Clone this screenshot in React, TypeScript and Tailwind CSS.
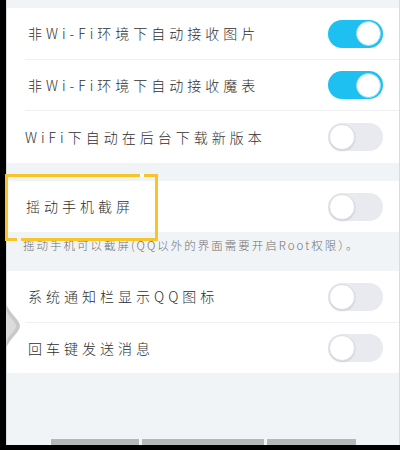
import React from 'react';

const font = { fontFamily: '"Noto Sans CJK SC", "Noto Sans", sans-serif' };

function Toggle({ on }: { on: boolean }) {
  return on ? (
    <div className="flex h-[28px] w-[55px] items-center justify-end rounded-full bg-[#1ec0f1] px-[2px]">
      <div className="h-[25px] w-[25px] rounded-full border border-[#8fdcf6] bg-white" />
    </div>
  ) : (
    <div className="flex h-[28px] w-[55px] items-center justify-start rounded-full bg-[#e8eaf0] px-[1px]">
      <div className="h-[26px] w-[26px] rounded-full border border-[#dcdee3] bg-white shadow-[0_1px_2px_rgba(0,0,0,0.12)]" />
    </div>
  );
}

function Row({
  label,
  on,
  divider,
  indent = 'pl-[21px]',
  height = 'h-[52px]',
}: {
  label: string;
  on: boolean;
  divider?: boolean;
  indent?: string;
  height?: string;
}) {
  return (
    <div className={`flex ${height} flex-col bg-white`}>
      <div className={`flex flex-1 items-center justify-between pr-[16px] ${indent}`}>
        <span className="text-[14px] font-light tracking-[4px] text-[#2e2e2e]">{label}</span>
        <Toggle on={on} />
      </div>
      {divider ? <div className="ml-[18px] h-px bg-[#eef0f3]" /> : null}
    </div>
  );
}

export default function App() {
  return (
    <div className="relative flex h-[450px] w-[400px] flex-col overflow-hidden bg-black" style={font}>
      <div className="flex flex-1">
        <div className="w-[6px] bg-black" />
        <div className="flex flex-1 flex-col border-l border-r border-[#d9dcdf] bg-[#f1f4f7]">
          <div className="h-[8px]" />
          <Row label="非Wi-Fi环境下自动接收图片" on divider height="h-[52px]" />
          <Row label="非Wi-Fi环境下自动接收魔表" on divider height="h-[51px]" />
          <Row label="WiFi下自动在后台下载新版本" on={false} indent="pl-[18px]" height="h-[52px]" />
          <div className="h-[18px]" />
          <Row label="摇动手机截屏" on={false} indent="pl-[19px]" height="h-[51px]" />
          <div className="h-[39px] pl-[16px] pt-[5px] text-[11.5px] font-light tracking-[2px] text-[#6f6f6f]">
            摇动手机可以截屏(QQ以外的界面需要开启Root权限）。
          </div>
          <Row label="系统通知栏显示QQ图标" on={false} divider height="h-[52px]" />
          <Row label="回车键发送消息" on={false} height="h-[50px]" />
          <div className="flex flex-1 items-end">
            <div className="ml-[44px] flex gap-[3px]">
              <div className="h-[6px] w-[88px] bg-[#b3b8b8]" />
              <div className="h-[6px] w-[122px] bg-[#b3b8b8]" />
              <div className="h-[6px] w-[89px] bg-[#b3b8b8]" />
            </div>
          </div>
        </div>
      </div>
      <div className="h-[5px] bg-black" />

      {/* highlight box */}
      <div className="absolute left-[5px] top-[174px] h-[67px] w-[153px] border-[3px] border-[#f7c52a]" />
      <div className="absolute left-[140px] top-[174px] h-[3px] w-[4px] bg-white" />
      <div className="absolute left-[17px] top-[238px] h-[3px] w-[4px] bg-[#f1f4f7]" />

      {/* side handle */}
      <svg className="absolute left-[6px] top-[304px]" width="16" height="44" viewBox="0 0 16 44">
        <path d="M0 0 C4 10 14 16 14 22 C14 28 4 34 0 44 Z" fill="#c9c9c9" />
        <path d="M0 6 C3 13 10 18 10 22 C10 26 3 31 0 38 Z" fill="#dcdcdc" />
      </svg>
    </div>
  );
}
